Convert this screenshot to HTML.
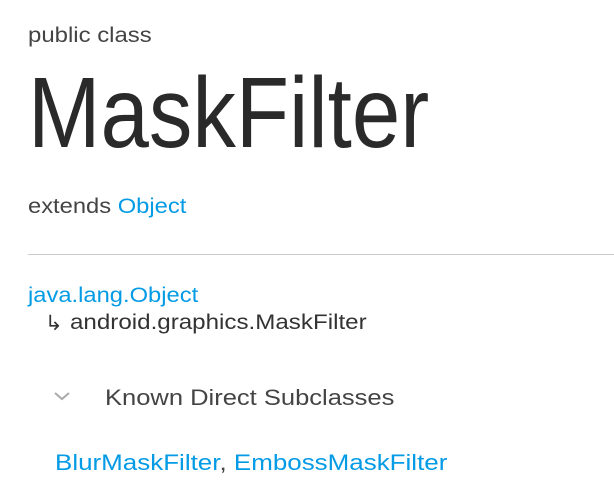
<!DOCTYPE html>
<html><head><style>
html,body{margin:0;padding:0;background:#fff;width:614px;height:498px;overflow:hidden;font-family:"Liberation Sans",sans-serif;}
.a{position:absolute;white-space:nowrap;transform-origin:0 0;}
.l{color:#039be5;}
</style></head><body>
<div class="a" style="left:28px;top:24px;font-size:21px;color:#444;transform:scaleX(1.14);">public class</div>
<div class="a" style="left:28px;top:58px;font-size:100px;color:#2a2a2a;line-height:110px;transform:scaleX(0.87);">MaskFilter</div>
<div class="a" style="left:28px;top:195px;font-size:21px;color:#444;transform:scaleX(1.13);">extends <span class="l">Object</span></div>
<div class="a" style="left:28px;top:254px;width:586px;height:1px;background:#ccc;"></div>
<div class="a l" style="left:28px;top:284px;font-size:21px;transform:scaleX(1.13);">java.lang.Object</div>
<div class="a" style="left:45px;top:311px;font-size:21px;color:#333;">↳</div>
<div class="a" style="left:70px;top:311px;font-size:21px;color:#333;transform:scaleX(1.15);">android.graphics.MaskFilter</div>
<svg class="a" style="left:53px;top:390px" width="18" height="12"><path d="M2 3 L9 9 L16 3" stroke="#aaa" stroke-width="2" fill="none"/></svg>
<div class="a" style="left:105px;top:385px;font-size:22px;color:#444;transform:scaleX(1.16);">Known Direct Subclasses</div>
<div class="a" style="left:55px;top:450px;font-size:22px;color:#444;transform:scaleX(1.18);"><span class="l">BlurMaskFilter</span>, <span class="l">EmbossMaskFilter</span></div>
</body></html>
